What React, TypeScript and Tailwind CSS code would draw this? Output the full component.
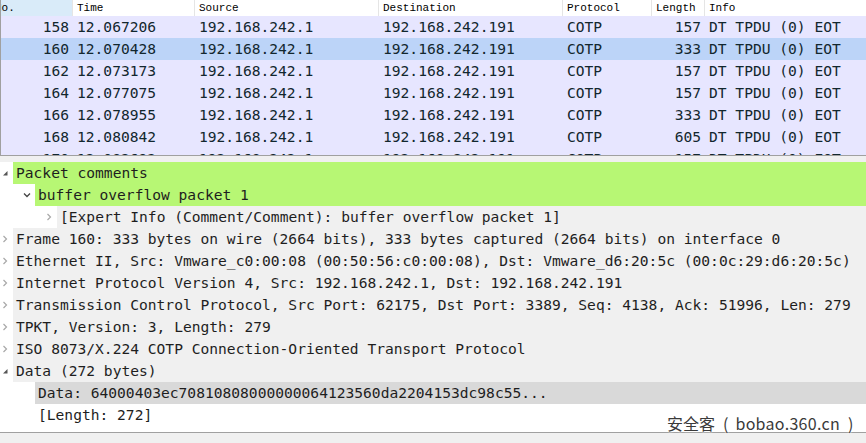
import type { ReactNode } from "react";

const cols = "grid grid-cols-[72px_122px_184px_184px_89px_53px_1fr]";

const packets = [
  ["158", "12.067206", "157"],
  ["160", "12.070428", "333"],
  ["162", "12.073173", "157"],
  ["164", "12.077075", "157"],
  ["166", "12.078955", "333"],
  ["168", "12.080842", "605"],
  ["170", "12.082693", "157"],
];

function Chevron({ down = false }: { down?: boolean }) {
  return (
    <svg width="8" height="8" viewBox="0 0 8 8" className="shrink-0">
      {down ? (
        <path d="M1 2.5 L4 5.5 L7 2.5" fill="none" stroke="#444" strokeWidth="1.3" />
      ) : (
        <path d="M2.5 1 L5.5 4 L2.5 7" fill="none" stroke="#a8a8a8" strokeWidth="1.2" />
      )}
    </svg>
  );
}

function Open() {
  return (
    <svg width="8" height="8" viewBox="0 0 8 8" className="shrink-0">
      <path d="M6.5 2 L6.5 6.5 L2 6.5 Z" fill="#555" />
    </svg>
  );
}

type Line = { level: number; icon: "open" | "down" | "right" | "none"; text: string; bg: string };

const lines: Line[] = [
  { level: 0, icon: "open", text: "Packet comments", bg: "bg-[#b7f774]" },
  { level: 1, icon: "down", text: "buffer overflow packet 1", bg: "bg-[#b7f774]" },
  { level: 2, icon: "right", text: "[Expert Info (Comment/Comment): buffer overflow packet 1]", bg: "bg-[#f0f0f0]" },
  { level: 0, icon: "right", text: "Frame 160: 333 bytes on wire (2664 bits), 333 bytes captured (2664 bits) on interface 0", bg: "bg-[#f0f0f0]" },
  { level: 0, icon: "right", text: "Ethernet II, Src: Vmware_c0:00:08 (00:50:56:c0:00:08), Dst: Vmware_d6:20:5c (00:0c:29:d6:20:5c)", bg: "bg-[#f0f0f0]" },
  { level: 0, icon: "right", text: "Internet Protocol Version 4, Src: 192.168.242.1, Dst: 192.168.242.191", bg: "bg-[#f0f0f0]" },
  { level: 0, icon: "right", text: "Transmission Control Protocol, Src Port: 62175, Dst Port: 3389, Seq: 4138, Ack: 51996, Len: 279", bg: "bg-[#f0f0f0]" },
  { level: 0, icon: "right", text: "TPKT, Version: 3, Length: 279", bg: "bg-[#f0f0f0]" },
  { level: 0, icon: "right", text: "ISO 8073/X.224 COTP Connection-Oriented Transport Protocol", bg: "bg-[#f0f0f0]" },
  { level: 0, icon: "open", text: "Data (272 bytes)", bg: "bg-[#f0f0f0]" },
  { level: 1, icon: "none", text: "Data: 64000403ec70810808000000064123560da2204153dc98c55...", bg: "bg-[#d9d9d9]" },
  { level: 1, icon: "none", text: "[Length: 272]", bg: "bg-white" },
];

function Cell({ children, right = false }: { children: ReactNode; right?: boolean }) {
  return (
    <div className={`overflow-hidden whitespace-nowrap ${right ? "pr-[4px] text-right" : "pl-[4px]"}`}>{children}</div>
  );
}

export default function App() {
  return (
    <div className="relative h-[443px] w-[866px] overflow-hidden bg-[#f0f0f0] font-['DejaVu_Sans_Mono',monospace]">
      {/* packet list */}
      <div className="h-[156px] overflow-hidden border-b border-l border-[#a0a0a0] bg-white">
        <div className={`${cols} h-[16px] font-['Liberation_Mono',monospace] text-[11px] leading-[16px] text-black`}>
          <div className="overflow-hidden whitespace-nowrap border-r border-[#e5e5e5] bg-[#d9ebf9]">
            <span className="ml-[-6px]">No.</span>
          </div>
          {["Time", "Source", "Destination", "Protocol", "Length", "Info"].map((h) => (
            <div key={h} className="overflow-hidden whitespace-nowrap border-r border-[#e5e5e5] pl-[4px] last:border-r-0">
              {h}
            </div>
          ))}
        </div>
        {packets.map(([no, t, len]) => (
          <div
            key={no}
            className={`${cols} h-[22px] text-[14.6px] leading-[22px] text-[#12272e] ${no === "160" ? "bg-[#bcd4f8]" : "bg-[#e7e6ff]"}`}
          >
            <Cell right>{no}</Cell>
            <Cell>{t}</Cell>
            <Cell>192.168.242.1</Cell>
            <Cell>192.168.242.191</Cell>
            <Cell>COTP</Cell>
            <Cell right>{len}</Cell>
            <Cell>DT TPDU (0) EOT</Cell>
          </div>
        ))}
      </div>

      {/* splitter */}
      <div className="h-[6px] bg-[#f0f0f0]" />

      {/* details tree */}
      <div className="h-[270px] overflow-hidden bg-white text-[14.6px] leading-[22px] text-[#1e1e1e]">
        {lines.map((l, i) => (
          <div key={i} className="flex h-[22px]">
            <div className="shrink-0" style={{ width: l.level * 22 }} />
            <div className="flex w-[13px] shrink-0 items-center pl-[1px]">
              {l.icon === "open" && <Open />}
              {l.icon === "down" && <Chevron down />}
              {l.icon === "right" && <Chevron />}
            </div>
            <div className={`flex-1 whitespace-nowrap pl-[3px] ${l.bg}`}>{l.text}</div>
          </div>
        ))}
      </div>

      {/* bytes pane */}
      <div className="h-[11px] border-t border-[#a0a0a0] bg-[#f0f0f0]" />

      {/* watermark */}
      <div className="absolute left-[667px] top-[411px] flex items-baseline whitespace-nowrap font-['Noto_Sans_CJK_SC',sans-serif] text-[16px] text-[#3a3a3a] [text-shadow:0_0_2px_#fff,0_0_2px_#fff]">
        <span>安全客</span>
        <span className="ml-[8px]">(</span>
        <span className="ml-[7px] tracking-[0.3px]">bobao.360.cn</span>
        <span className="ml-[8px]">)</span>
      </div>
    </div>
  );
}
